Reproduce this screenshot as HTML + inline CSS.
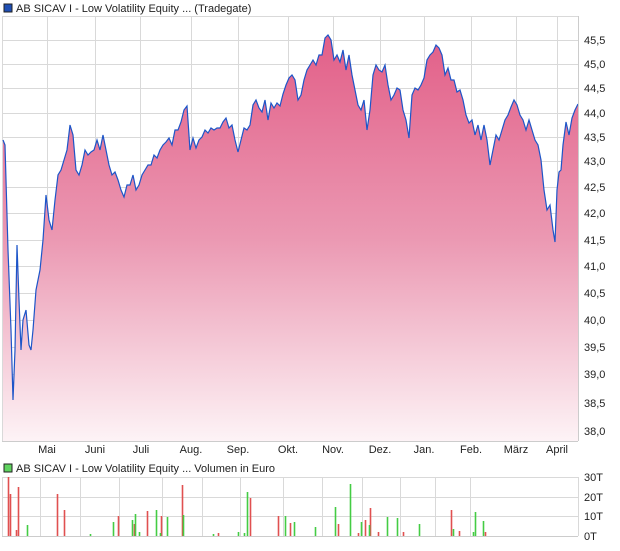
<!DOCTYPE html>
<html><head><meta charset="utf-8"><style>
body{margin:0;background:#fff;width:620px;height:546px;overflow:hidden;font-family:"Liberation Sans",sans-serif;}
svg text{font-family:"Liberation Sans",sans-serif;font-size:11px;fill:#222;}
</style></head><body>
<svg width="620" height="546" viewBox="0 0 620 546" xmlns="http://www.w3.org/2000/svg">
<defs>
<linearGradient id="pg" x1="0" y1="35" x2="0" y2="441" gradientUnits="userSpaceOnUse">
<stop offset="0" stop-color="#e25f88"/><stop offset="0.5" stop-color="#eb98b2"/><stop offset="1" stop-color="#fdf3f6"/>
</linearGradient>
</defs>
<rect x="4" y="4" width="8" height="8" fill="#1f4fb4" stroke="#222" stroke-width="1"/>
<text x="16" y="12">AB SICAV I - Low Volatility Equity ... (Tradegate)</text>
<g stroke="#d9d9d9" stroke-width="1">
<line x1="2" y1="16.5" x2="578" y2="16.5"/>
<line x1="2" y1="40.5" x2="578" y2="40.5"/><line x1="2" y1="64.5" x2="578" y2="64.5"/><line x1="2" y1="88.5" x2="578" y2="88.5"/><line x1="2" y1="113.5" x2="578" y2="113.5"/><line x1="2" y1="137.5" x2="578" y2="137.5"/><line x1="2" y1="161.5" x2="578" y2="161.5"/><line x1="2" y1="187.5" x2="578" y2="187.5"/><line x1="2" y1="213.5" x2="578" y2="213.5"/><line x1="2" y1="240.5" x2="578" y2="240.5"/><line x1="2" y1="266.5" x2="578" y2="266.5"/><line x1="2" y1="293.5" x2="578" y2="293.5"/><line x1="2" y1="320.5" x2="578" y2="320.5"/><line x1="2" y1="347.5" x2="578" y2="347.5"/><line x1="2" y1="374.5" x2="578" y2="374.5"/><line x1="2" y1="403.5" x2="578" y2="403.5"/><line x1="2" y1="431.5" x2="578" y2="431.5"/>
<line x1="47.5" y1="16" x2="47.5" y2="441"/><line x1="95.5" y1="16" x2="95.5" y2="441"/><line x1="140.5" y1="16" x2="140.5" y2="441"/><line x1="191.5" y1="16" x2="191.5" y2="441"/><line x1="238.5" y1="16" x2="238.5" y2="441"/><line x1="288.5" y1="16" x2="288.5" y2="441"/><line x1="333.5" y1="16" x2="333.5" y2="441"/><line x1="380.5" y1="16" x2="380.5" y2="441"/><line x1="424.5" y1="16" x2="424.5" y2="441"/><line x1="471.5" y1="16" x2="471.5" y2="441"/><line x1="516.5" y1="16" x2="516.5" y2="441"/><line x1="557.5" y1="16" x2="557.5" y2="441"/>
<line x1="2.5" y1="16" x2="2.5" y2="441"/>
</g>
<path id="p" d="M3,140 L5,145 8,250 11,330 13,400 15,350 17,245 19,300 21,350 23,320 26,310 29,345 31,350 33,330 36,290 40,270 43,240 46,195 49,220 52,230 55,200 58,175 61,170 64,160 67,150 70,125 73,135 76,170 79,175 82,165 85,150 88,155 91,152 94,150 97,140 100,150 103,135 106,150 109,165 112,175 115,172 118,180 121,190 124,197 127,185 130,185 133,175 136,190 139,185 142,175 145,170 148,165 151,165 154,155 157,158 160,150 163,145 166,142 169,138 172,145 175,130 178,130 181,122 184,110 187,106 190,150 193,138 196,148 199,140 202,137 205,130 208,133 211,128 214,130 217,128 220,128 223,122 226,118 229,128 232,125 235,140 238,152 241,140 244,128 247,130 250,125 253,105 256,100 259,108 262,112 265,100 268,120 271,103 274,108 277,103 280,106 283,94 286,85 289,78 292,75 295,80 298,100 301,95 304,80 307,70 310,65 313,60 316,65 319,55 322,55 325,38 328,35 331,40 334,60 337,55 340,62 343,50 346,70 349,55 352,75 355,90 358,105 361,110 364,100 367,130 370,110 373,75 376,65 379,70 382,72 385,65 388,85 391,100 394,95 397,88 400,90 403,110 406,120 409,138 412,95 415,88 418,90 421,85 424,78 427,60 430,55 433,52 436,45 439,48 442,55 445,75 448,68 451,80 454,80 457,92 460,90 463,100 466,115 469,123 472,120 475,135 478,125 481,140 484,125 487,140 490,165 493,150 496,135 499,140 502,130 505,120 508,115 511,107 514,100 517,105 520,115 523,120 526,130 529,120 532,130 535,140 538,145 541,160 544,190 547,210 550,205 553,230 555,242 557,190 559,172 561,170 563,145 566,122 569,135 572,118 575,110 578,104" fill="none"/>
<path d="M3,441 L3,140 5,145 8,250 11,330 13,400 15,350 17,245 19,300 21,350 23,320 26,310 29,345 31,350 33,330 36,290 40,270 43,240 46,195 49,220 52,230 55,200 58,175 61,170 64,160 67,150 70,125 73,135 76,170 79,175 82,165 85,150 88,155 91,152 94,150 97,140 100,150 103,135 106,150 109,165 112,175 115,172 118,180 121,190 124,197 127,185 130,185 133,175 136,190 139,185 142,175 145,170 148,165 151,165 154,155 157,158 160,150 163,145 166,142 169,138 172,145 175,130 178,130 181,122 184,110 187,106 190,150 193,138 196,148 199,140 202,137 205,130 208,133 211,128 214,130 217,128 220,128 223,122 226,118 229,128 232,125 235,140 238,152 241,140 244,128 247,130 250,125 253,105 256,100 259,108 262,112 265,100 268,120 271,103 274,108 277,103 280,106 283,94 286,85 289,78 292,75 295,80 298,100 301,95 304,80 307,70 310,65 313,60 316,65 319,55 322,55 325,38 328,35 331,40 334,60 337,55 340,62 343,50 346,70 349,55 352,75 355,90 358,105 361,110 364,100 367,130 370,110 373,75 376,65 379,70 382,72 385,65 388,85 391,100 394,95 397,88 400,90 403,110 406,120 409,138 412,95 415,88 418,90 421,85 424,78 427,60 430,55 433,52 436,45 439,48 442,55 445,75 448,68 451,80 454,80 457,92 460,90 463,100 466,115 469,123 472,120 475,135 478,125 481,140 484,125 487,140 490,165 493,150 496,135 499,140 502,130 505,120 508,115 511,107 514,100 517,105 520,115 523,120 526,130 529,120 532,130 535,140 538,145 541,160 544,190 547,210 550,205 553,230 555,242 557,190 559,172 561,170 563,145 566,122 569,135 572,118 575,110 578,104 L578,441 Z" fill="url(#pg)"/>
<use href="#p" stroke="#1d55c8" stroke-width="1.2" fill="none"/>
<line x1="2" y1="441.5" x2="578" y2="441.5" stroke="#ccc"/>
<line x1="578.5" y1="16" x2="578.5" y2="441" stroke="#ccc"/>
<g>
<text x="584" y="44">45,5</text><text x="584" y="68">45,0</text><text x="584" y="92">44,5</text><text x="584" y="117">44,0</text><text x="584" y="141">43,5</text><text x="584" y="165">43,0</text><text x="584" y="191">42,5</text><text x="584" y="217">42,0</text><text x="584" y="244">41,5</text><text x="584" y="270">41,0</text><text x="584" y="297">40,5</text><text x="584" y="324">40,0</text><text x="584" y="351">39,5</text><text x="584" y="378">39,0</text><text x="584" y="407">38,5</text><text x="584" y="435">38,0</text>
</g>
<g text-anchor="middle">
<text x="47" y="453">Mai</text><text x="95" y="453">Juni</text><text x="141" y="453">Juli</text><text x="191" y="453">Aug.</text><text x="238" y="453">Sep.</text><text x="288" y="453">Okt.</text><text x="333" y="453">Nov.</text><text x="380" y="453">Dez.</text><text x="424" y="453">Jan.</text><text x="471" y="453">Feb.</text><text x="516" y="453">März</text><text x="557" y="453">April</text>
</g>
<rect x="4" y="464" width="8" height="8" fill="#5fd35f" stroke="#222" stroke-width="1"/>
<text x="16" y="472">AB SICAV I - Low Volatility Equity ... Volumen in Euro</text>
<g stroke="#d9d9d9" stroke-width="1">
<line x1="2" y1="477.5" x2="578" y2="477.5"/><line x1="2" y1="497.5" x2="578" y2="497.5"/><line x1="2" y1="516.5" x2="578" y2="516.5"/>
<line x1="40.5" y1="477" x2="40.5" y2="536"/><line x1="80.5" y1="477" x2="80.5" y2="536"/><line x1="119.5" y1="477" x2="119.5" y2="536"/><line x1="162.5" y1="477" x2="162.5" y2="536"/><line x1="202.5" y1="477" x2="202.5" y2="536"/><line x1="240.5" y1="477" x2="240.5" y2="536"/><line x1="283.5" y1="477" x2="283.5" y2="536"/><line x1="322.5" y1="477" x2="322.5" y2="536"/><line x1="362.5" y1="477" x2="362.5" y2="536"/><line x1="400.5" y1="477" x2="400.5" y2="536"/><line x1="435.5" y1="477" x2="435.5" y2="536"/><line x1="470.5" y1="477" x2="470.5" y2="536"/>
<line x1="2.5" y1="477" x2="2.5" y2="536"/><line x1="578.5" y1="477" x2="578.5" y2="536"/>
</g>
<g stroke="#e05050" stroke-width="1.6">
<line x1="8.5" y1="477" x2="8.5" y2="536"/><line x1="10.5" y1="494" x2="10.5" y2="536"/><line x1="16.5" y1="530" x2="16.5" y2="536"/><line x1="18.5" y1="487" x2="18.5" y2="536"/><line x1="57.5" y1="494" x2="57.5" y2="536"/><line x1="64.5" y1="510" x2="64.5" y2="536"/><line x1="118.5" y1="516" x2="118.5" y2="536"/><line x1="134.5" y1="524" x2="134.5" y2="536"/><line x1="147.5" y1="511" x2="147.5" y2="536"/><line x1="161.5" y1="516" x2="161.5" y2="536"/><line x1="182.5" y1="485" x2="182.5" y2="536"/><line x1="218.5" y1="533" x2="218.5" y2="536"/><line x1="250.5" y1="498" x2="250.5" y2="536"/><line x1="278.5" y1="516" x2="278.5" y2="536"/><line x1="290.5" y1="523" x2="290.5" y2="536"/><line x1="338.5" y1="524" x2="338.5" y2="536"/><line x1="358.5" y1="533" x2="358.5" y2="536"/><line x1="365.5" y1="520" x2="365.5" y2="536"/><line x1="370.5" y1="508" x2="370.5" y2="536"/><line x1="378.5" y1="532" x2="378.5" y2="536"/><line x1="403.5" y1="532" x2="403.5" y2="536"/><line x1="451.5" y1="510" x2="451.5" y2="536"/><line x1="459.5" y1="531" x2="459.5" y2="536"/><line x1="485.5" y1="532" x2="485.5" y2="536"/>
</g>
<g stroke="#44cc44" stroke-width="1.6">
<line x1="27.5" y1="525" x2="27.5" y2="536"/><line x1="90.5" y1="534" x2="90.5" y2="536"/><line x1="113.5" y1="522" x2="113.5" y2="536"/><line x1="132.5" y1="520" x2="132.5" y2="536"/><line x1="135.5" y1="514" x2="135.5" y2="536"/><line x1="139.5" y1="532" x2="139.5" y2="536"/><line x1="156.5" y1="510" x2="156.5" y2="536"/><line x1="160.5" y1="533" x2="160.5" y2="536"/><line x1="167.5" y1="517" x2="167.5" y2="536"/><line x1="183.5" y1="515" x2="183.5" y2="536"/><line x1="213.5" y1="534" x2="213.5" y2="536"/><line x1="238.5" y1="532" x2="238.5" y2="536"/><line x1="244.5" y1="533" x2="244.5" y2="536"/><line x1="247.5" y1="492" x2="247.5" y2="536"/><line x1="285.5" y1="516" x2="285.5" y2="536"/><line x1="294.5" y1="522" x2="294.5" y2="536"/><line x1="315.5" y1="527" x2="315.5" y2="536"/><line x1="335.5" y1="507" x2="335.5" y2="536"/><line x1="350.5" y1="484" x2="350.5" y2="536"/><line x1="361.5" y1="522" x2="361.5" y2="536"/><line x1="369.5" y1="525" x2="369.5" y2="536"/><line x1="387.5" y1="517" x2="387.5" y2="536"/><line x1="397.5" y1="518" x2="397.5" y2="536"/><line x1="419.5" y1="524" x2="419.5" y2="536"/><line x1="453.5" y1="529" x2="453.5" y2="536"/><line x1="473.5" y1="532" x2="473.5" y2="536"/><line x1="475.5" y1="512" x2="475.5" y2="536"/><line x1="483.5" y1="521" x2="483.5" y2="536"/>
</g>
<line x1="2" y1="536.5" x2="578" y2="536.5" stroke="#ccc"/>
<text x="584" y="481">30T</text><text x="584" y="501">20T</text><text x="584" y="520">10T</text><text x="584" y="540">0T</text>
</svg>
</body></html>
